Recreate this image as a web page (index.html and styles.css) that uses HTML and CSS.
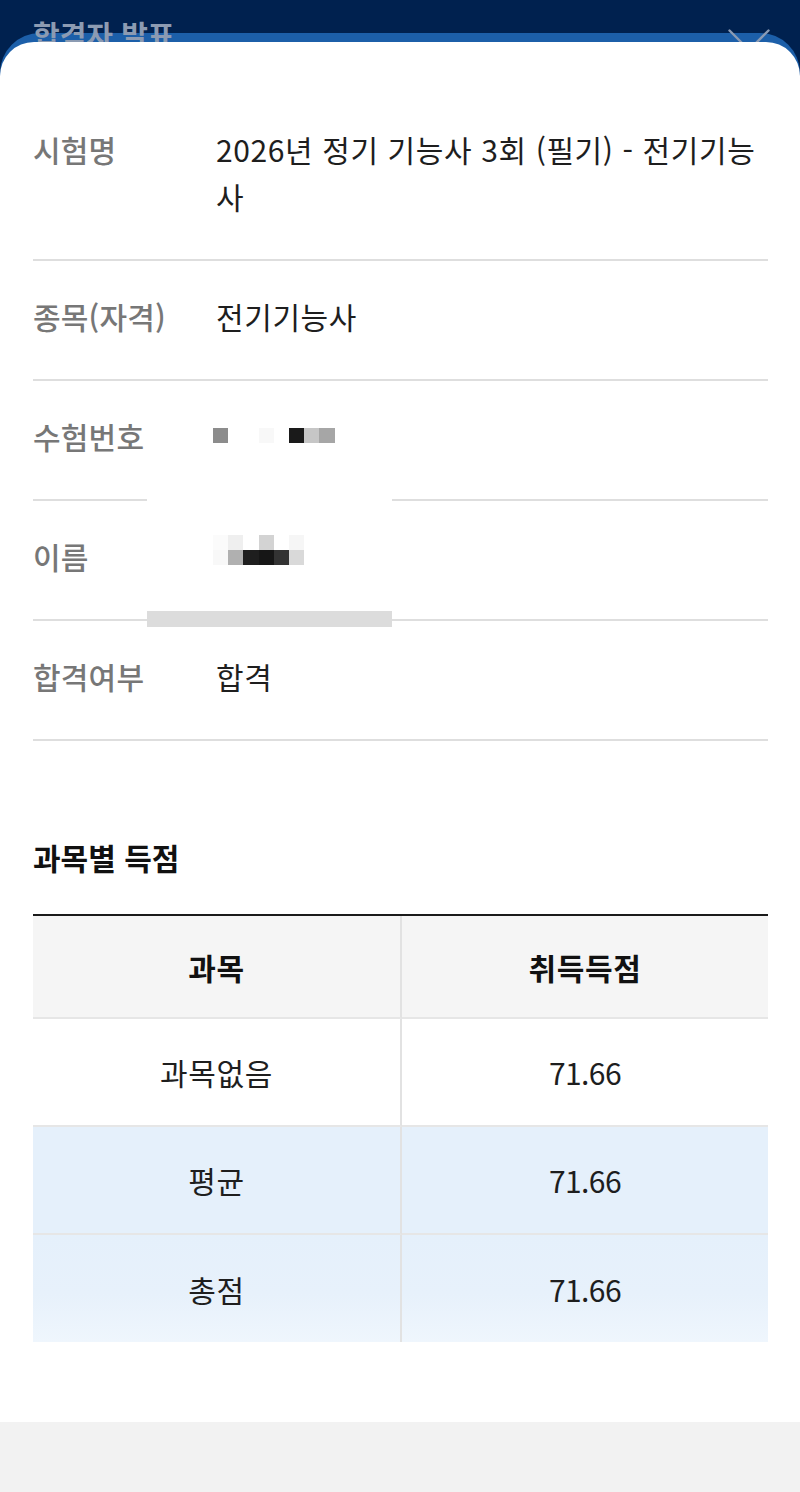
FILE: index.html
```html
<!DOCTYPE html>
<html lang="ko">
<head>
<meta charset="utf-8">
<title>합격자 발표</title>
<link rel="stylesheet" href="styles.css">
</head>
<body>
<div class="page">
  <header class="topbar">
    <h1 class="topbar-title">합격자 발표</h1>
    <svg class="close-icon" width="42" height="42" viewBox="0 0 42 42" aria-hidden="true">
      <path d="M1.5 1.5 L40.5 40.5 M40.5 1.5 L1.5 40.5" stroke="#8b9bb4" stroke-width="2.4" stroke-linecap="round" fill="none"/>
    </svg>
  </header>
  <div class="sheet">
    <div class="sheet-inner">
      <div class="content">
        <div class="info-list">
          <div class="info-row">
            <div class="info-label">시험명</div>
            <div class="info-value">2026년 정기 기능사 3회 (필기) - 전기기능사</div>
          </div>
          <div class="info-row">
            <div class="info-label">종목(자격)</div>
            <div class="info-value">전기기능사</div>
          </div>
          <div class="info-row">
            <div class="info-label">수험번호</div>
            <div class="info-value">
              <div class="mosaic mosaic-num">
                <div class="mrow">
                  <span class="px s-8c"></span><span class="px"></span><span class="px"></span><span class="px s-f8"></span><span class="px"></span><span class="px s-1a"></span><span class="px s-c4"></span><span class="px s-a4"></span>
                </div>
              </div>
            </div>
          </div>
          <div class="info-row">
            <div class="info-label">이름</div>
            <div class="info-value">
              <div class="mosaic mosaic-name">
                <div class="mrow">
                  <span class="px s-fb"></span><span class="px s-ef"></span><span class="px"></span><span class="px s-d3"></span><span class="px"></span><span class="px s-f6"></span>
                </div>
                <div class="mrow">
                  <span class="px s-f8"></span><span class="px s-b0"></span><span class="px s-1e"></span><span class="px s-16"></span><span class="px s-33"></span><span class="px s-d9"></span>
                </div>
              </div>
            </div>
          </div>
          <div class="info-row">
            <div class="info-label">합격여부</div>
            <div class="info-value">합격</div>
          </div>
          <div class="cover cover-gap"></div>
          <div class="cover cover-bar"></div>
        </div>

        <h2 class="section-title">과목별 득점</h2>

        <div class="score-table">
          <div class="cell head">과목</div>
          <div class="cell head">취득득점</div>
          <div class="cell">과목없음</div>
          <div class="cell num">71.66</div>
          <div class="cell hl">평균</div>
          <div class="cell hl num">71.66</div>
          <div class="cell hl last">총점</div>
          <div class="cell hl last num">71.66</div>
        </div>
      </div>
      <div class="footer-band"></div>
    </div>
  </div>
</div>
</body>
</html>
```

FILE: styles.css
```css
* {
  box-sizing: border-box;
}

html, body {
  margin: 0;
  padding: 0;
}

body {
  font-family: "Noto Sans CJK KR", "Noto Sans", sans-serif;
  background: #ffffff;
}

.page {
  width: 800px;
  min-height: 1492px;
  background: #00214f;
  display: flex;
  flex-direction: column;
}

.topbar {
  position: relative;
  z-index: 1;
  height: 33px;
  padding: 0 30px 0 33px;
  display: flex;
  justify-content: space-between;
  align-items: flex-start;
}

.topbar-title {
  margin: 0;
  padding-top: 14px;
  font-size: 29px;
  line-height: 40px;
  font-weight: 700;
  color: #8c9bb2;
  letter-spacing: 0;
  white-space: nowrap;
}

.close-icon {
  flex: none;
  margin-top: 29px;
  width: 42px;
  height: 42px;
}

.sheet {
  flex: 1;
  background: #1c5fa9;
  border-radius: 40px 40px 0 0;
  padding-top: 9px;
  display: flex;
  flex-direction: column;
}

.sheet-inner {
  position: relative;
  z-index: 2;
  flex: 1;
  background: #ffffff;
  border-radius: 34px 34px 0 0;
  display: flex;
  flex-direction: column;
}

.content {
  flex: 1;
  padding: 52px 32px 79px 33px;
}

.info-list {
  position: relative;
}

.info-row {
  display: grid;
  grid-template-columns: 183px 1fr;
  padding: 32px 0 39px;
  border-bottom: 2px solid #dedede;
  font-size: 30px;
  line-height: 47px;
}

.info-label {
  color: #777777;
  font-weight: 500;
  letter-spacing: 0.2px;
}

.info-value {
  color: #1e1e1e;
  font-weight: 400;
  letter-spacing: 0.6px;
}

.mosaic {
  display: flex;
  flex-direction: column;
  margin-left: -3px;
}

.mosaic-num {
  padding-top: 15px;
}

.mosaic-name {
  margin-top: 2px;
}

.mrow {
  display: flex;
  height: 15px;
}

.px {
  display: block;
  width: 15.2px;
  height: 15px;
  background: transparent;
}

.s-8c { background: #8c8c8c; }
.s-f8 { background: #f8f8f8; }
.s-1a { background: #1a1a1a; }
.s-c4 { background: #c6c6c6; }
.s-a4 { background: #a6a6a6; }
.s-fb { background: #fbfbfb; }
.s-ef { background: #efefef; }
.s-d3 { background: #d3d3d3; }
.s-f6 { background: #f6f6f6; }
.s-b0 { background: #b0b0b0; }
.s-1e { background: #1e1e1e; }
.s-16 { background: #161616; }
.s-33 { background: #333333; }
.s-d9 { background: #d9d9d9; }

.cover {
  position: absolute;
  left: 114px;
  width: 245px;
}

.cover-gap {
  top: 403px;
  height: 6px;
  background: #ffffff;
}

.cover-bar {
  top: 517px;
  height: 16px;
  background: #dcdcdc;
}

.section-title {
  margin: 96px 0 37px;
  font-size: 30px;
  line-height: 40px;
  font-weight: 700;
  color: #111111;
  letter-spacing: 0;
}

.score-table {
  display: grid;
  grid-template-columns: 369px 1fr;
  border-top: 2px solid #1a1a1a;
}

.cell {
  display: flex;
  align-items: center;
  justify-content: center;
  height: 108px;
  border-bottom: 2px solid #e6e6e6;
  font-size: 30px;
  color: #1e1e1e;
  letter-spacing: 0.6px;
}

.cell.num {
  letter-spacing: -0.6px;
}

.cell:nth-child(odd) {
  border-right: 2px solid #e2e2e2;
}

.cell.head {
  height: 103px;
  background: #f5f5f5;
  font-weight: 700;
  color: #111111;
}

.cell.hl {
  background: #e5f0fb;
}

.cell.last {
  height: 107px;
  border-bottom: none;
  background: linear-gradient(to bottom, #e5f0fb 0%, #e7f1fb 55%, #eff6fd 100%);
}

.footer-band {
  height: 70px;
  background: #f2f2f2;
}
```
